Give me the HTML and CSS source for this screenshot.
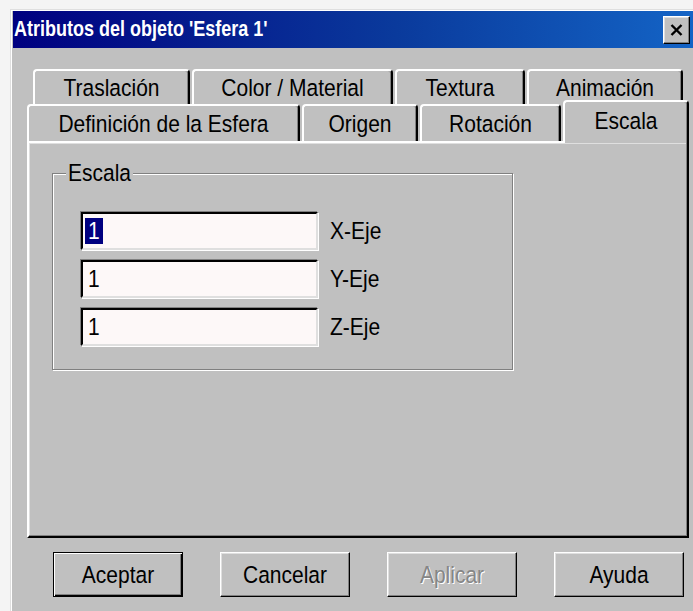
FILE: index.html
```html
<!DOCTYPE html>
<html lang="es">
<head>
<meta charset="utf-8">
<title>Atributos del objeto 'Esfera 1'</title>
<link rel="stylesheet" href="styles.css">
</head>
<body>
<div class="window">
  <div class="titlebar">
    <span class="title">Atributos del objeto 'Esfera 1'</span>
    <button class="close" type="button" aria-label="Cerrar">
      <svg width="13" height="12" viewBox="0 0 13 12"><path d="M1.5 1 L11.5 11 M11.5 1 L1.5 11" stroke="#000" stroke-width="2.4" fill="none"/></svg>
    </button>
  </div>
  <div class="client">
    <div class="tabs">
      <div class="tabrow back">
        <div class="tab w-tras"><span class="t">Traslación</span></div>
        <div class="tab w-color"><span class="t">Color / Material</span></div>
        <div class="tab w-tex"><span class="t">Textura</span></div>
        <div class="tab w-anim"><span class="t">Animación</span></div>
      </div>
      <div class="tabrow front">
        <div class="tab w-def"><span class="t">Definición de la Esfera</span></div>
        <div class="tab w-orig"><span class="t">Origen</span></div>
        <div class="tab w-rot"><span class="t">Rotación</span></div>
        <div class="tab active w-esc"><span class="t">Escala</span></div>
      </div>
    </div>
    <div class="panel">
      <fieldset class="group">
        <legend><span class="t">Escala</span></legend>
        <div class="fields">
          <div class="field"><span class="val selected"><span class="t">1</span></span></div>
          <span class="lbl"><span class="t">X-Eje</span></span>
          <div class="field"><span class="val"><span class="t">1</span></span></div>
          <span class="lbl"><span class="t">Y-Eje</span></span>
          <div class="field"><span class="val"><span class="t">1</span></span></div>
          <span class="lbl"><span class="t">Z-Eje</span></span>
        </div>
      </fieldset>
    </div>
    <div class="buttons">
      <button class="btn default" type="button"><span class="t">Aceptar</span></button>
      <button class="btn" type="button"><span class="t">Cancelar</span></button>
      <button class="btn disabled" type="button"><span class="t">Aplicar</span></button>
      <button class="btn" type="button"><span class="t">Ayuda</span></button>
    </div>
  </div>
</div>
</body>
</html>
```

FILE: styles.css
```css
html, body {
  margin: 0;
  padding: 0;
}

body {
  width: 693px;
  height: 611px;
  overflow: hidden;
  background: #f4f4f4;
  font-family: "Liberation Sans", Arial, sans-serif;
  font-size: 21px;
  color: #000;
}

/* tall, narrow dialog lettering */
.t {
  display: inline-block;
  transform: scaleY(1.14);
}

.window {
  box-sizing: border-box;
  margin: 9px 0 0 10px;
  width: 700px;
  height: 620px;
  padding: 1px 0 0 2px;
  background: #c0c0c0;
  border-top: 1px solid #dfdfdf;
  border-left: 1px solid #dfdfdf;
  box-shadow: inset 1px 1px 0 #fff;
}

/* caption bar */
.titlebar {
  height: 37px;
  display: flex;
  align-items: center;
  justify-content: space-between;
  background: linear-gradient(90deg, #000080 0%, #0a3a9c 55%, #1466c8 100%);
}

.title {
  display: inline-block;
  padding-left: 1px;
  color: #fff;
  font-weight: bold;
  font-size: 18px;
  transform: scaleY(1.24);
  transform-origin: left center;
  white-space: nowrap;
}

.close {
  box-sizing: border-box;
  width: 27px;
  height: 28px;
  margin-right: 20px;
  padding: 0;
  display: flex;
  align-items: center;
  justify-content: center;
  background: #c0c0c0;
  border: 1px solid;
  border-color: #fff #000 #000 #fff;
  box-shadow: inset -1px -1px 0 #808080, inset 1px 1px 0 #dfdfdf;
}

.client {
  padding: 21px 0 0 14px;
}

/* property sheet tabs */
.tabrow {
  display: flex;
  gap: 2px;
}

.tabrow.back {
  margin-left: 6px;
  height: 35px;
}

.tabrow.front {
  height: 37px;
  align-items: flex-end;
}

.tab {
  box-sizing: border-box;
  height: 100%;
  display: flex;
  align-items: center;
  justify-content: center;
  background: #c0c0c0;
  border-top: 2px solid #fff;
  border-left: 2px solid #fff;
  border-right: 2px solid #000;
  border-radius: 4px 4px 0 0;
  box-shadow: inset -1px 0 0 #808080;
  white-space: nowrap;
}

.w-tras { width: 157px; }
.w-color { width: 201px; }
.w-tex { width: 130px; }
.w-anim { width: 156px; }
.w-def { width: 273px; }
.w-orig { width: 116px; }
.w-rot { width: 141px; }
.w-esc { width: 126px; }

.tab.active {
  position: relative;
  z-index: 1;
  height: 43px;
  margin-bottom: -2px;
  padding-bottom: 3px;
}

/* page of the sheet */
.panel {
  box-sizing: border-box;
  width: 662px;
  height: 397px;
  border: 2px solid;
  border-color: #fff #000 #000 #fff;
  box-shadow: inset -1px -1px 0 #808080, inset 1px 1px 0 #dfdfdf;
  padding: 18px 0 0 23px;
}

.group {
  box-sizing: border-box;
  margin: 0;
  padding: 0;
  width: 461px;
  height: 209px;
  border: 1px solid #808080;
  box-shadow: inset 1px 1px 0 #fff, 1px 1px 0 #fff;
}

.group legend {
  margin-left: 13px;
  padding: 0 2px;
  background: #c0c0c0;
  line-height: 24px;
}

.fields {
  display: grid;
  grid-template-columns: 237px auto;
  grid-auto-rows: 38px;
  column-gap: 12px;
  row-gap: 10px;
  padding: 27px 0 0 28px;
  align-items: center;
}

.field {
  box-sizing: border-box;
  height: 38px;
  display: flex;
  align-items: center;
  padding-left: 2px;
  background: #fdf8f8;
  border: 2px solid;
  border-color: #000 #dfdfdf #dfdfdf #000;
  box-shadow: -1px -1px 0 #808080, 1px 1px 0 #fff;
}

.val {
  padding: 0 3px;
  line-height: 26px;
}

.val.selected {
  background: #000080;
  color: #fff;
}

.lbl {
  white-space: nowrap;
}

/* dialog buttons */
.buttons {
  display: flex;
  gap: 37px;
  margin: 14px 0 0 26px;
}

.btn {
  box-sizing: border-box;
  width: 130px;
  height: 45px;
  padding: 0;
  font-family: inherit;
  font-size: 21px;
  color: #000;
  background: #c0c0c0;
  border: 1px solid;
  border-color: #fff #000 #000 #fff;
  box-shadow: inset -1px -1px 0 #808080, inset 1px 1px 0 #dfdfdf;
}

.btn.default {
  border-color: #000;
  box-shadow: inset 1px 1px 0 #fff, inset -1px -1px 0 #000, inset -2px -2px 0 #808080;
}

.btn.disabled {
  color: #868686;
  text-shadow: 1px 1px 0 #fff;
}
```
